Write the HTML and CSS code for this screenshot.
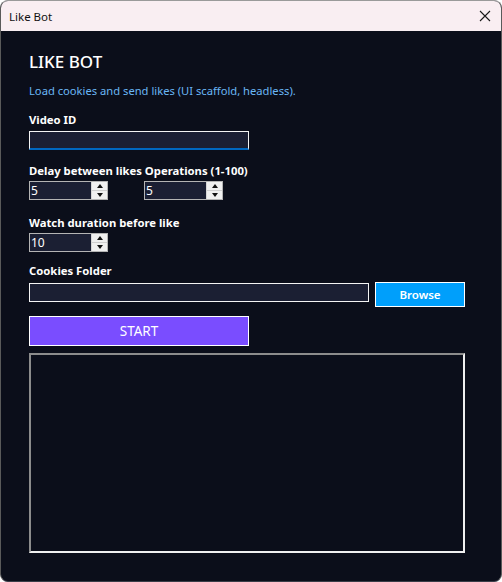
FILE: index.html
```html
<!DOCTYPE html>
<html>
<head>
<meta charset="utf-8">
<link rel="stylesheet" href="styles.css">
</head>
<body>
<div class="window">
  <div class="titlebar">
    <span class="title">Like Bot</span>
    <svg class="close" width="12" height="12" viewBox="0 0 12 12"><path d="M1 1 L11 11 M11 1 L1 11" stroke="#1a1a1a" stroke-width="1.1" fill="none"/></svg>
  </div>
  <div class="content">
    <h1 class="heading">LIKE BOT</h1>
    <p class="sub">Load cookies and send likes (UI scaffold, headless).</p>

    <div class="label lbl-video">Video ID</div>
    <div class="textbox focus w220"></div>

    <div class="label lbl-delay">Delay between likes Operations (1-100)</div>
    <div class="spin-row">
      <div class="spin"><span class="val">5</span><span class="btns"><span class="b up"></span><span class="b down"></span></span></div>
      <div class="spin"><span class="val">5</span><span class="btns"><span class="b up"></span><span class="b down"></span></span></div>
    </div>

    <div class="label lbl-watch">Watch duration before like</div>
    <div class="spin-row">
      <div class="spin"><span class="val">10</span><span class="btns"><span class="b up"></span><span class="b down"></span></span></div>
    </div>

    <div class="label lbl-cookies">Cookies Folder</div>
    <div class="cookie-row">
      <div class="textbox plain w340"></div>
      <div class="browse">Browse</div>
    </div>

    <div class="start">START</div>

    <div class="log"></div>
  </div>
</div>
</body>
</html>
```
FILE: styles.css
```css
html, body {
  margin: 0;
  padding: 0;
  background: #ffffff;
}
body {
  font-family: "Noto Sans", "DejaVu Sans", sans-serif;
  width: 502px;
  height: 582px;
  overflow: hidden;
}
.window {
  box-sizing: border-box;
  width: 502px;
  height: 582px;
  border: 1px solid #9a9a9a;
  border-left-color: #5a5a5a;
  border-right-color: #5a5a5a;
  border-bottom-color: #3a3d48;
  border-radius: 8px;
  overflow: hidden;
  background: #0b0e1a;
  display: flex;
  flex-direction: column;
}
.titlebar {
  height: 30px;
  background: #f9eef2;
  display: flex;
  align-items: center;
  justify-content: space-between;
  padding: 0 10px 0 8px;
  flex: none;
}
.title {
  font-size: 11.5px;
  color: #111;
}
.close {
  display: block;
}
.content {
  flex: 1;
  padding: 20px 0 0 28px;
  display: flex;
  flex-direction: column;
  align-items: flex-start;
}
.heading {
  margin: 0;
  font-size: 17px;
  line-height: 22px;
  font-weight: 500;
  color: #ffffff;
}
.sub {
  margin: 10px 0 0 0;
  font-size: 11.2px;
  line-height: 16px;
  color: #6ab7f5;
}
.label {
  font-size: 11.3px;
  line-height: 16px;
  font-weight: 700;
  color: #ffffff;
}
.lbl-video { margin-top: 13px; }
.lbl-delay { margin-top: 13px; }
.lbl-watch { margin-top: 15px; }
.lbl-cookies { margin-top: 11px; }

.textbox {
  box-sizing: border-box;
  height: 19px;
  background: #1b1f33;
  border: 1px solid #f4f4f4;
}
.focus {
  margin-top: 3px;
  border-bottom: 2px solid #0067c0;
}
.w220 { width: 220px; }
.w340 { width: 340px; margin-top: 1px; }

.spin-row {
  display: flex;
  gap: 36px;
  margin-top: 2px;
}
.spin {
  box-sizing: border-box;
  width: 79px;
  height: 19px;
  border: 1px solid #b4b4b4;
  background: #1b1f33;
  display: flex;
}
.val {
  flex: 1;
  font-size: 12px;
  line-height: 17px;
  color: #ffffff;
  padding-left: 1px;
}
.btns {
  width: 15px;
  display: flex;
  flex-direction: column;
  background: #f0f0f0;
  border-left: 1px solid #d6d6d6;
}
.b {
  flex: 1;
  display: flex;
  align-items: center;
  justify-content: center;
}
.b.up { border-bottom: 1px solid #cfcfcf; }
.b.up::before {
  content: "";
  border-left: 3px solid transparent;
  border-right: 3px solid transparent;
  border-bottom: 4px solid #111;
}
.b.down::before {
  content: "";
  border-left: 3px solid transparent;
  border-right: 3px solid transparent;
  border-top: 4px solid #111;
}

.cookie-row {
  display: flex;
  align-items: flex-start;
  gap: 6px;
  margin-top: 3px;
}
.browse {
  box-sizing: border-box;
  width: 90px;
  height: 25px;
  background: #009ffb;
  border: 1px solid #ffffff;
  color: #ffffff;
  font-size: 11.5px;
  font-weight: 600;
  display: flex;
  align-items: center;
  justify-content: center;
}
.start {
  box-sizing: border-box;
  margin-top: 9px;
  width: 220px;
  height: 30px;
  background: #7a4dff;
  border: 1px solid #ffffff;
  color: #ffffff;
  font-size: 13.5px;
  display: flex;
  align-items: center;
  justify-content: center;
}
.log {
  box-sizing: border-box;
  margin-top: 7px;
  width: 436px;
  height: 200px;
  background: #0b0e1a;
  border: 2px solid #f0f0f0;
  border-top-color: #8c8c8c;
  border-left-color: #8c8c8c;
}
```
